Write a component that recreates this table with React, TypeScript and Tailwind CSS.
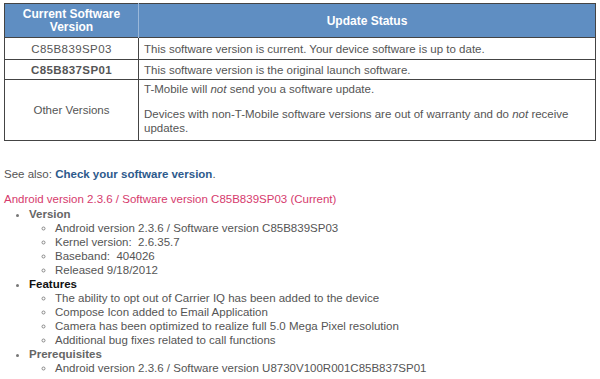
const ROWS = [
  {
    version: "C85B839SP03",
    bold: false,
    status: "This software version is current. Your device software is up to date.",
  },
  {
    version: "C85B837SP01",
    bold: true,
    status: "This software version is the original launch software.",
  },
];

const VERSION_ITEMS = [
  "Android version 2.3.6 / Software version C85B839SP03",
  "Kernel version:  2.6.35.7",
  "Baseband:  404026",
  "Released 9/18/2012",
];

const FEATURE_ITEMS = [
  "The ability to opt out of Carrier IQ has been added to the device",
  "Compose Icon added to Email Application",
  "Camera has been optimized to realize full 5.0 Mega Pixel resolution",
  "Additional bug fixes related to call functions",
];

const SubList = ({ items }: { items: string[] }) => (
  <ul className="list-[circle] pl-[26px] marker:text-[10px] marker:text-[#888]">
    {items.map((item, i) => (
      <li key={i} className="h-[14px] whitespace-pre">
        {item}
      </li>
    ))}
  </ul>
);

export default function App() {
  return (
    <div
      className="min-h-[379px] bg-white pl-[4px] pt-[3px] text-[11.5px] leading-[14px] text-[#555]"
      style={{ fontFamily: '"Liberation Sans", Arial, sans-serif' }}
    >
      <table className="w-[592px] border-collapse border border-[#444]">
        <thead>
          <tr className="h-[34px] bg-[#5f8ec2] text-[12px] text-white font-bold">
            <th className="w-[134px] border-r border-[#9ab8da] text-center leading-[13px] font-bold">
              Current Software
              <br />
              Version
            </th>
            <th className="text-center font-bold">Update Status</th>
          </tr>
        </thead>
        <tbody>
          {ROWS.map((row, i) => (
            <tr
              key={row.version}
              className={`border-t border-[#444] ${i === 0 ? "h-[22px]" : "h-[20px]"}`}
            >
              <td
                className={`border-r border-[#444] text-center tracking-[0.4px] ${
                  row.bold ? "font-bold" : ""
                }`}
              >
                {row.version}
              </td>
              <td className="px-[5px]">{row.status}</td>
            </tr>
          ))}
          <tr className="h-[61px] border-t border-[#444]">
            <td className="border-r border-[#444] text-center">Other Versions</td>
            <td className="px-[5px] pt-[2px] pb-[5px] align-top">
              <p className="mb-[11px]">
                T-Mobile will <em>not</em> send you a software update.
              </p>
              <p className="pr-[8px]">
                Devices with non-T-Mobile software versions are out of warranty and do{" "}
                <em>not</em> receive updates.
              </p>
            </td>
          </tr>
        </tbody>
      </table>

      <p className="mt-[26px]">
        See also: <a className="font-bold text-[#2d5a8c]">Check your software version</a>.
      </p>

      <p className="mt-[11px] h-[15px] text-[#d63a6d]">
        Android version 2.3.6 / Software version C85B839SP03 (Current)
      </p>

      <ul className="list-disc pl-[25px] marker:text-[#777]">
        <li className="leading-[14px]">
          <span className="font-bold text-[#666]">Version</span>
          <SubList items={VERSION_ITEMS} />
        </li>
        <li className="leading-[14px]">
          <span className="font-bold text-[#111]">Features</span>
          <SubList items={FEATURE_ITEMS} />
        </li>
        <li className="leading-[14px]">
          <span className="font-bold text-[#666]">Prerequisites</span>
          <SubList items={["Android version 2.3.6 / Software version U8730V100R001C85B837SP01"]} />
        </li>
      </ul>
    </div>
  );
}
